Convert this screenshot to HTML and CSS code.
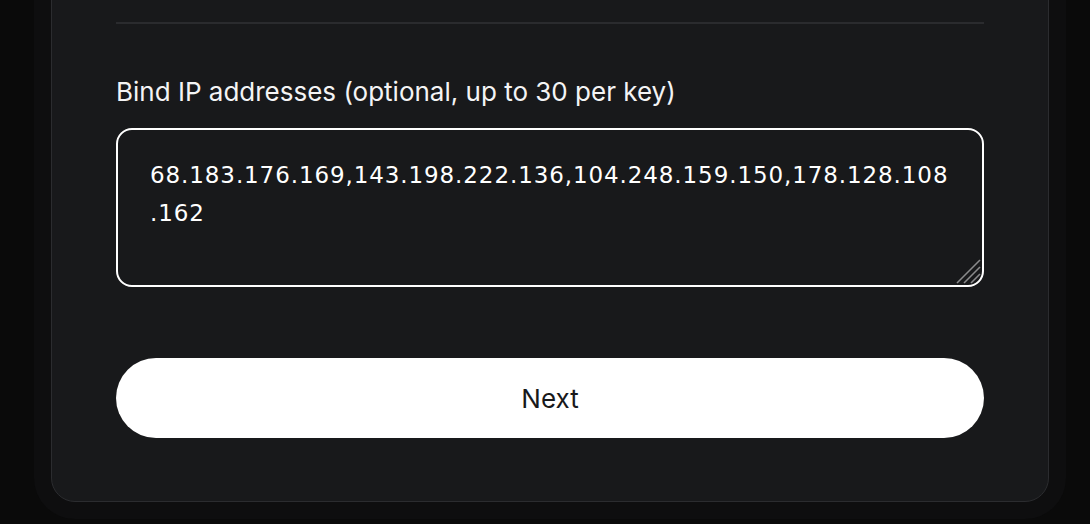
FILE: index.html
```html
<!DOCTYPE html>
<html>
<head>
<meta charset="utf-8">
<link rel="stylesheet" href="styles.css">
</head>
<body>
<div class="page">
  <div class="card">
    <div class="divider"></div>
    <label class="label" for="ips">Bind IP addresses (optional, up to 30 per key)</label>
    <div class="field-wrap">
      <textarea id="ips" class="field">68.183.176.169,143.198.222.136,104.248.159.150,178.128.108.162</textarea>
      <svg class="grip" width="26" height="26" viewBox="0 0 26 26" aria-hidden="true">
        <line x1="2" y1="25" x2="25" y2="2" stroke="#8a8a8c" stroke-width="1.6"/>
        <line x1="9" y1="25" x2="25" y2="9" stroke="#8a8a8c" stroke-width="1.6"/>
        <line x1="16" y1="25" x2="25" y2="16" stroke="#8a8a8c" stroke-width="1.6"/>
      </svg>
    </div>
    <button class="next">Next</button>
  </div>
</div>
</body>
</html>
```
FILE: styles.css
```css
html, body {
  margin: 0;
  padding: 0;
  background: #0a0a0a;
  height: 100%;
  overflow: hidden;
}
body {
  font-family: Inter, "Noto Sans", sans-serif;
  color: #f4f4f5;
}
.page {
  padding: 0 41px 0 51px;
}
.card {
  margin-top: -60px;
  background: #18191b;
  border: 1px solid #2b2c2f;
  border-radius: 24px;
  box-shadow: 0 0 0 17px #0e0e0f;
  padding: 81px 64px 63px 64px;
  display: flex;
  flex-direction: column;
}
.divider {
  height: 2px;
  background: #2a2b2e;
}
.label {
  margin-top: 52px;
  font-size: 26px;
  line-height: 32px;
  color: #f4f4f5;
}
.field-wrap {
  position: relative;
  margin-top: 20px;
  display: flex;
}
.field {
  flex: 1;
  height: 159px;
  box-sizing: border-box;
  background: #18191b;
  border: 2px solid #ffffff;
  border-radius: 16px;
  color: #ffffff;
  font-family: "DejaVu Sans", sans-serif;
  font-size: 23px;
  letter-spacing: 0.9px;
  line-height: 38px;
  padding: 26px 32px;
  outline: none;
  resize: none;
}
.grip {
  position: absolute;
  right: 3px;
  bottom: 3px;
  pointer-events: none;
}
.next {
  margin-top: 71px;
  height: 80px;
  border: none;
  border-radius: 40px;
  background: #ffffff;
  color: #18191b;
  font-family: Inter, "Noto Sans", sans-serif;
  font-size: 26px;
  cursor: pointer;
}
```
